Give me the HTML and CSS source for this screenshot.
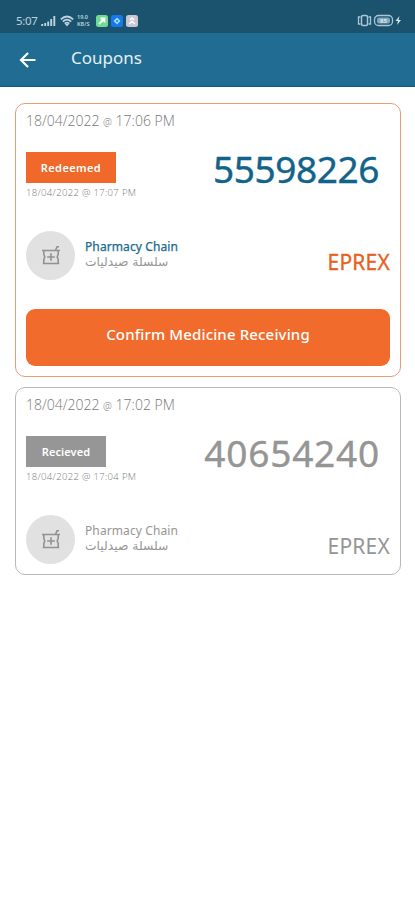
FILE: index.html
```
<!DOCTYPE html>
<html lang="en">
<head>
<meta charset="utf-8">
<title>Coupons</title>
<link rel="stylesheet" href="styles.css">
</head>
<body>
<svg width="0" height="0" class="defs" aria-hidden="true">
  <symbol id="mortar" viewBox="0 0 20 20">
    <path d="M1 4.500h18M2.800 5v3.200l1 2.800-1 2.500V17.500h14.400V13.500l-1-2.500 1-2.800V5M1.800 17.500h16.400M14.500 4.500l1.500-3.700h2M10 7.200v7.600M6.200 11h7.600" fill="none" stroke="currentColor" stroke-width="1.600"/>
  </symbol>
</svg>
<div class="status">
  <span class="time">5:07</span>
  <svg class="signal" width="15" height="12" viewBox="0 0 15 12"><path d="M1.200 11V9M4.200 11V8M7.200 11V6.500M10.200 11V4M13.300 11V1" stroke="currentColor" stroke-width="1.900"/></svg>
  <svg class="wifi" width="14" height="12" viewBox="0 0 14 12"><path d="M.8 4.300Q7-1.300 13.200 4.300M2.800 6.600Q7 2.800 11.200 6.600M4.700 8.700Q7 6.700 9.300 8.700" fill="none" stroke="currentColor" stroke-width="1.700"/><path d="M5 9.100h4L7 11.500z" fill="currentColor"/></svg>
  <span class="speed"><span>19.0</span><span>KB/S</span></span>
  <svg class="app" width="12" height="12" viewBox="0 0 12 12"><rect width="12" height="12" rx="2.500" fill="#6fdc93"/><path d="M3 9l5-5M4.500 3.500h4v4" fill="none" stroke="#fff" stroke-width="1.800"/></svg>
  <svg class="app" width="12" height="12" viewBox="0 0 12 12"><rect width="12" height="12" rx="2.500" fill="#1479ee"/><path d="M6 2.500l3.500 3.500L6 9.500 2.500 6z" fill="#a9d4ff"/><circle cx="6" cy="6" r="1" fill="#1479ee"/></svg>
  <svg class="app" width="12" height="12" viewBox="0 0 12 12"><rect width="12" height="12" rx="2.500" fill="#c9c8d2"/><path d="M3 9l3-2.500L9 9M4 5l2-2 2 2" fill="none" stroke="#fff" stroke-width="1.500"/></svg>
  <svg class="right" width="46" height="13" viewBox="0 0 46 13" fill="none" stroke="#a9c6d4">
    <rect x="4.500" y="1.500" width="6" height="10" rx="1.500" stroke-width="1.500"/><path d="M3.500 3H1.500v7h2M11.500 3H13.500v7h-2" stroke-width="1.300"/>
    <rect x="17.500" y="1.500" width="18" height="10" rx="4" stroke-width="1.300"/><rect x="20" y="3.500" width="13" height="6" rx="2" fill="#83a8b9" stroke="none"/>
    <text x="26.500" y="9" class="battery">85</text>
    <path d="M42.500 2l-4 5h2.500l-1 4 4-5h-2.500z" fill="#d8e6ed" stroke="none"/>
  </svg>
</div>
<header class="bar">
  <svg width="18" height="18" viewBox="0 0 18 18"><path d="M16.500 9H2.500M9 2L2 9l7 7" fill="none" stroke="#fff" stroke-width="2.200"/></svg>
  <h1>Coupons</h1>
</header>
<main>
  <section class="card active">
    <div class="date">18/04/2022 <small>@</small> 17:06 PM</div>
    <div class="summary">
      <div><div class="badge redeemed">Redeemed</div><div class="stamp">18/04/2022 @ 17:07 PM</div></div>
      <div class="code">55598226</div>
    </div>
    <div class="provider">
      <div class="avatar"><svg width="20" height="20"><use href="#mortar"/></svg></div>
      <div class="names"><div class="en">Pharmacy Chain</div><div class="ar" lang="ar" dir="rtl">سلسلة صيدليات</div></div>
      <div class="drug">EPREX</div>
    </div>
    <button>Confirm Medicine Receiving</button>
  </section>
  <section class="card received">
    <div class="date">18/04/2022 <small>@</small> 17:02 PM</div>
    <div class="summary">
      <div><div class="badge">Recieved</div><div class="stamp">18/04/2022 @ 17:04 PM</div></div>
      <div class="code">40654240</div>
    </div>
    <div class="provider">
      <div class="avatar"><svg width="20" height="20"><use href="#mortar"/></svg></div>
      <div class="names"><div class="en">Pharmacy Chain</div><div class="ar" lang="ar" dir="rtl">سلسلة صيدليات</div></div>
      <div class="drug">EPREX</div>
    </div>
  </section>
</main>
</body>
</html>
```
FILE: styles.css
```
* { box-sizing: border-box; }
body { margin: 0; background: #fff; font-family: "Noto Sans", "DejaVu Sans", sans-serif; }
.defs { position: absolute; }
.status { height: 33px; background: #1b536f; color: #bdd3de; display: flex; align-items: center; padding: 8px 12px 0 16px; }
.time { font-size: 11.500px; letter-spacing: -.3px; width: 25px; white-space: nowrap; }
.wifi { margin-left: 4px; }
.speed { display: flex; flex-direction: column; width: 15px; margin: 0 4px 0 3px; font-size: 5.500px; line-height: 7px; font-weight: 600; white-space: nowrap; }
.app { margin-right: 3px; }
.right { margin-left: auto; }
.battery { font-size: 6px; font-weight: 700; text-anchor: middle; fill: #d6e5ec; stroke: none; }
.bar { height: 54px; background: #206c93; border-bottom: 1px solid #145d83; display: flex; align-items: center; padding-left: 19px; }
.bar svg { margin-top: 1px; }
h1 { margin: -4px 0 0 34px; color: #e4f0f5; font-size: 17px; font-weight: 400; letter-spacing: 0; }
main { padding: 16px 14px 0 15px; display: flex; flex-direction: column; gap: 10px; }
.card { border: 1px solid #b8b8b8; border-radius: 10px; padding: 0 10px; color: #959595; }
.active { height: 274px; border-color: #e99c70; }
.received { height: 188px; }
.date { height: 48px; padding-top: 6px; font-family: "Open Sans", sans-serif; font-size: 14px; line-height: 22px; font-weight: 300; color: #777; white-space: nowrap; }
.date small { font-size: 10px; }
.summary { height: 79px; display: flex; justify-content: space-between; padding-right: 10px; }
.badge { width: 80px; height: 31px; background: #969696; color: #fff; font-size: 11px; line-height: 31px; font-weight: 600; text-align: center; letter-spacing: .1px; }
.badge.redeemed { width: 90px; background: #f0682a; letter-spacing: .4px; }
.stamp { font-size: 9.500px; line-height: 19px; font-weight: 300; font-family: "Open Sans", sans-serif; color: #777; letter-spacing: .33px; white-space: nowrap; }
.code { font-size: 37px; line-height: 34px; font-weight: 400; color: #959595; letter-spacing: .8px; -webkit-text-stroke: .4px currentColor; }
.active .code { color: #12638a; letter-spacing: -.4px; padding-right: 1px; }
.provider { height: 49px; display: flex; align-items: center; }
.avatar { width: 49px; height: 49px; border-radius: 50%; background: #e1e1e1; color: #929292; display: flex; align-items: center; justify-content: center; }
.names { margin-left: 10px; }
.en { font-size: 12px; line-height: 17px; margin-top: -3px; white-space: nowrap; letter-spacing: .1px; }
.active .en { color: #17698d; letter-spacing: .1px; -webkit-text-stroke: .25px currentColor; }
.ar { font-family: "DejaVu Sans", sans-serif; font-size: 12.300px; line-height: 15px; text-align: left; white-space: nowrap; }
.drug { margin: 13px 0 0 auto; font-size: 21px; line-height: 28px; letter-spacing: .2px; }
.active .drug { color: #e9601d; -webkit-text-stroke: .3px currentColor; }
button { display: block; width: 364px; height: 57px; margin-top: 29px; padding: 0 0 8px; border: 0; border-radius: 9px; background: #f16b2c; color: #fff; font-family: "Noto Sans", sans-serif; font-size: 15px; font-weight: 500; letter-spacing: .15px; }
```
